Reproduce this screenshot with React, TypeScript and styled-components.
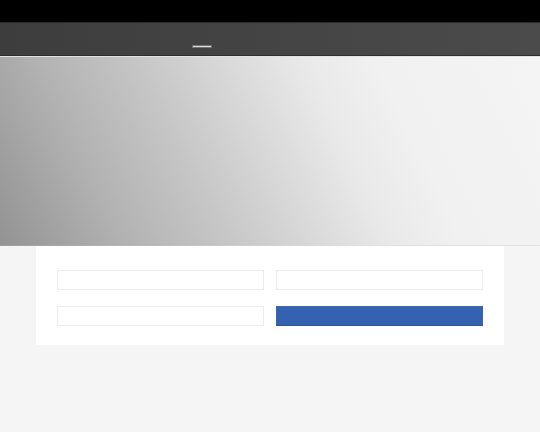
import React from "react";
import styled, { createGlobalStyle } from "styled-components";

const Global = createGlobalStyle`
  html, body { margin: 0; padding: 0; }
  body {
    background: #f5f5f5;
    font-family: "Liberation Sans", Arial, sans-serif;
    min-height: 432px;
  }
  * { box-sizing: border-box; }
`;

const TopBar = styled.div`
  height: 22px;
  background: #000;
`;

const Nav = styled.nav`
  height: 34px;
  background: linear-gradient(90deg, #3d3d3d 0%, #444 50%, #4b4b4b 100%);
  border-top: 1px solid #2a2a2a;
  border-bottom: 1px solid #2e2e2e;
  display: flex;
  align-items: flex-start;
  padding-left: 192px;
`;

const NavIndicator = styled.span`
  display: block;
  margin-top: 22px;
  width: 20px;
  height: 3px;
  background: #d8d8d8;
  border: 1px solid #777;
  border-radius: 1px;
`;

const Hero = styled.section`
  height: 190px;
  background: linear-gradient(
    64deg,
    #939393 0%,
    #b2b2b2 20%,
    #c6c6c6 36%,
    #d9d9d9 50%,
    #e9e9e9 62%,
    #f1f1f1 74%,
    #f4f4f4 100%
  );
  border-top: 1px solid #e2e2e2;
  border-bottom: 1px solid rgba(0, 0, 0, 0.07);
`;

const Card = styled.form`
  width: 468px;
  margin: 0 auto;
  background: #fff;
  padding: 24px 21px 19px;
  display: grid;
  grid-template-columns: 207px 207px;
  grid-auto-rows: 20px;
  column-gap: 12px;
  row-gap: 16px;
`;

const Field = styled.input`
  width: 100%;
  height: 20px;
  margin: 0;
  padding: 0 6px;
  border: 1px solid #ececec;
  background: #fff;
  outline: none;
  font: inherit;
  font-size: 12px;
`;

const Submit = styled.button`
  width: 100%;
  height: 20px;
  margin: 0;
  padding: 0;
  background: #3462b0;
  border: 1px solid #3a66b2;
  border-bottom-color: #2b5298;
  cursor: pointer;
`;

export default function App() {
  return (
    <>
      <Global />
      <TopBar />
      <Nav>
        <NavIndicator />
      </Nav>
      <Hero />
      <Card onSubmit={(e) => e.preventDefault()}>
        <Field aria-label="field 1" />
        <Field aria-label="field 2" />
        <Field aria-label="field 3" />
        <Submit type="submit" aria-label="submit" />
      </Card>
    </>
  );
}
